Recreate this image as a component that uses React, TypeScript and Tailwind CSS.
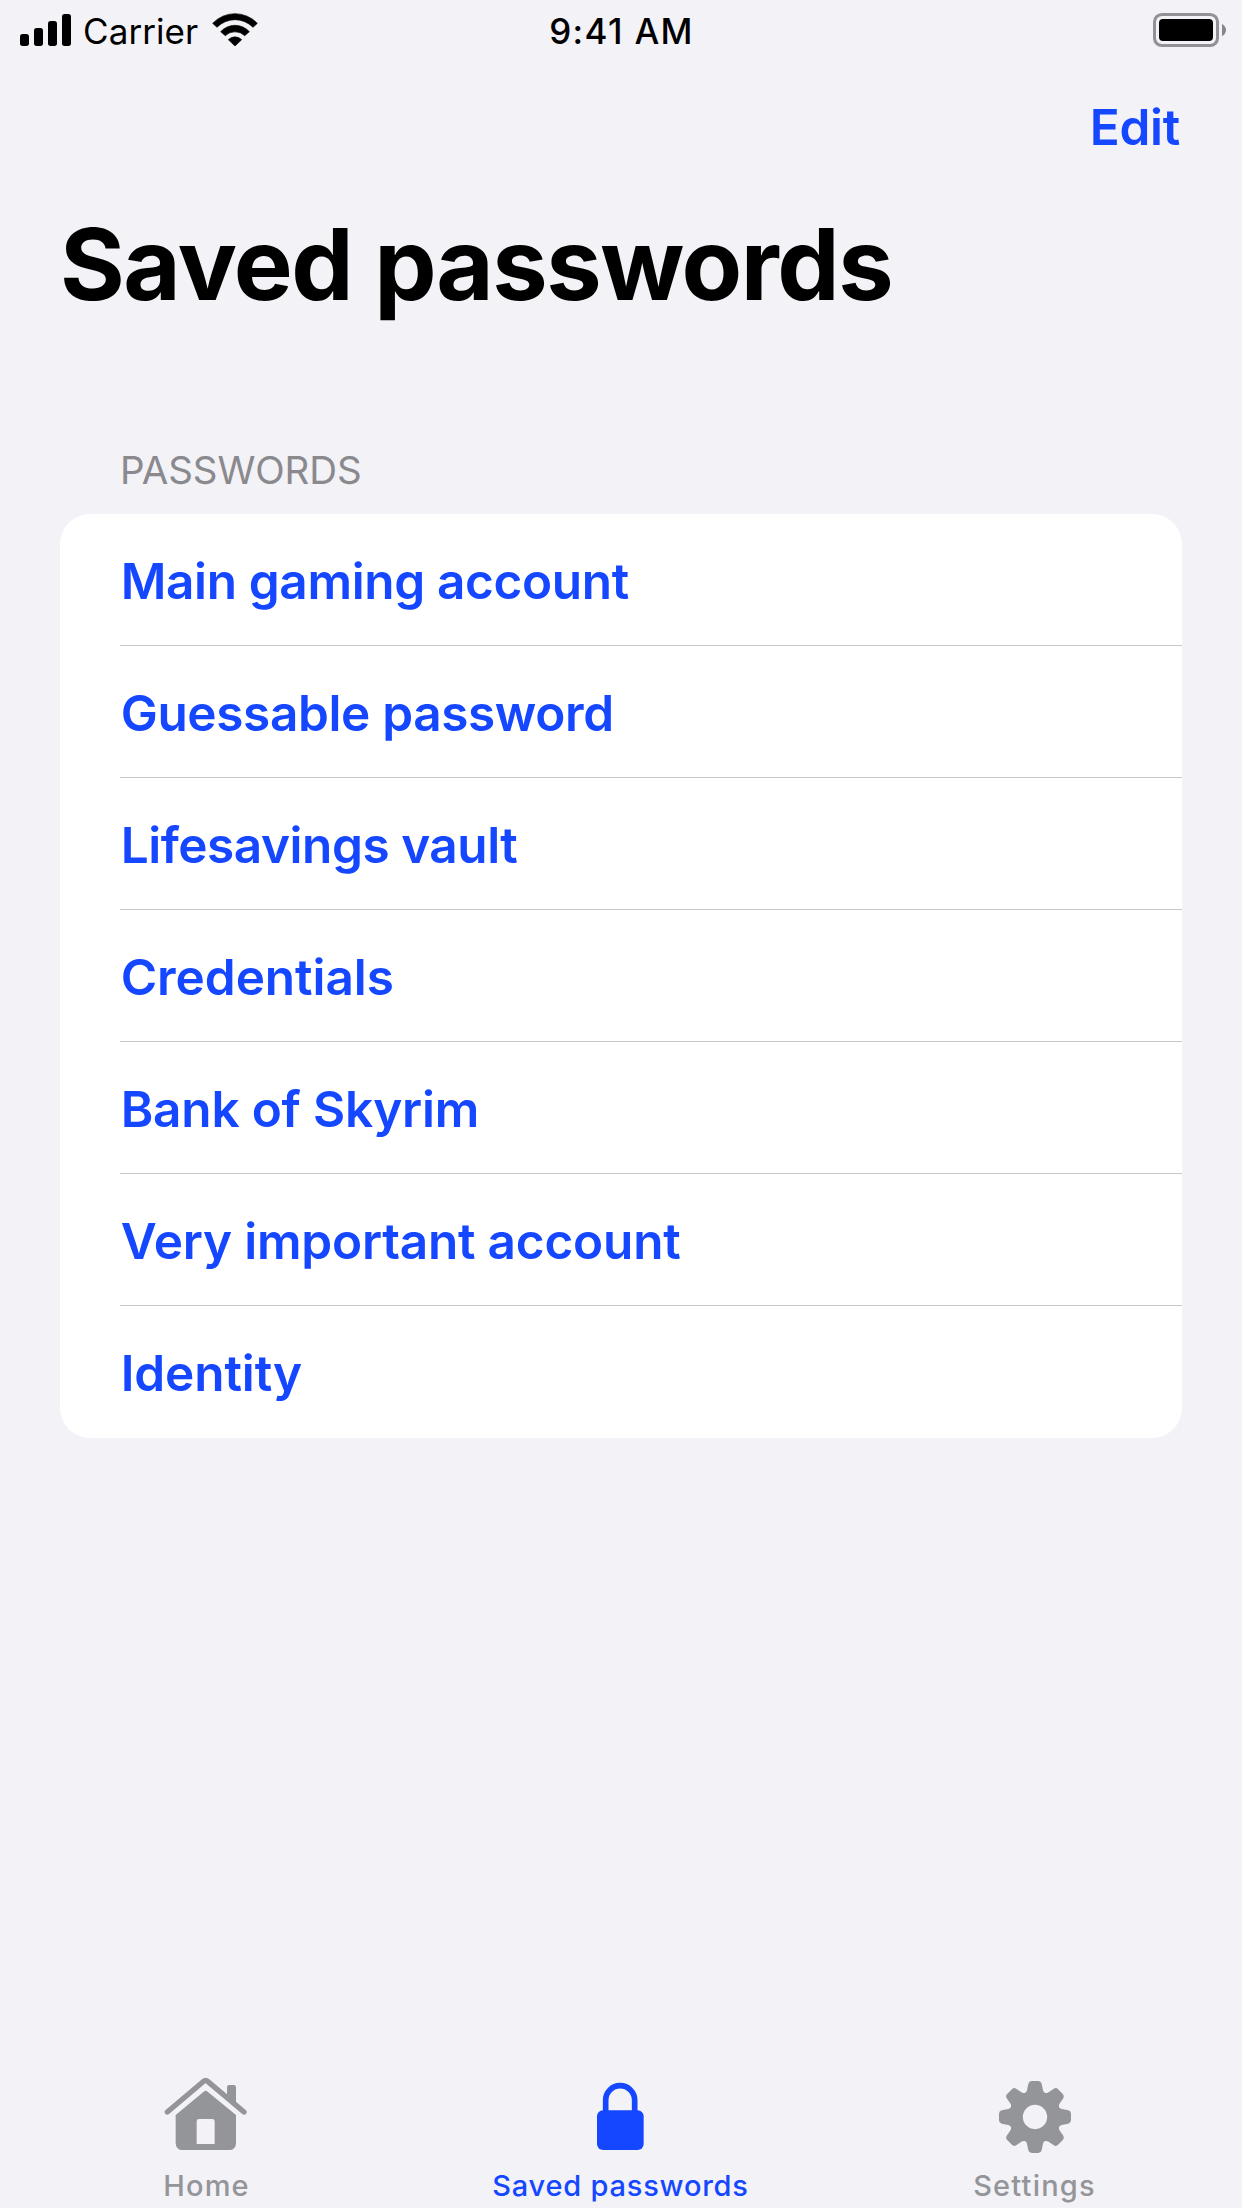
import React from "react";

const accounts = [
  { name: "Main gaming account", spacing: "tracking-[-0.35px]" },
  { name: "Guessable password", spacing: "tracking-[-0.36px]" },
  { name: "Lifesavings vault", spacing: "tracking-[-0.46px]" },
  { name: "Credentials", spacing: "tracking-[-0.06px]" },
  { name: "Bank of Skyrim", spacing: "tracking-[-0.2px]" },
  { name: "Very important account", spacing: "tracking-[-0.2px]" },
  { name: "Identity", spacing: "tracking-[-0.1px]" },
];

function SignalIcon() {
  return (
    <svg className="h-8 w-[51px]" viewBox="60 42 153 96" fill="currentColor">
      <rect x="60" y="102" width="27" height="36" rx="8" />
      <rect x="102" y="84" width="27" height="54" rx="8" />
      <rect x="144" y="63" width="27" height="75" rx="8" />
      <rect x="186" y="42" width="27" height="96" rx="8" />
    </svg>
  );
}

function WifiIcon() {
  return (
    <svg className="h-[34px] w-[46px]" viewBox="636 38 138 102" fill="currentColor" stroke="currentColor" strokeWidth="2" strokeLinejoin="round">
      <path d="M638 69A92 92 0 0 1 772 69L759 81A75 75 0 0 0 651 81Z" />
      <path d="M662 94A58 58 0 0 1 748 94L734 106A42 42 0 0 0 676 106Z" />
      <path d="M685 118A28 28 0 0 1 725 118L705 137Z" />
    </svg>
  );
}

function BatteryIcon() {
  return (
    <svg className="h-[34px] w-[73px]" viewBox="279 39 219 102">
      <rect x="283.5" y="43.5" width="189" height="93" rx="22" fill="none" stroke="#929195" strokeWidth="9" />
      <rect x="297" y="57" width="162" height="66" rx="12" fill="#000" />
      <path d="M486 71Q498 79 498 90Q498 101 486 109Z" fill="#87868a" />
    </svg>
  );
}

function HomeIcon() {
  return (
    <svg className="h-[100px] w-[130px]" viewBox="6 0 390 300" fill="currentColor">
      <path d="M82 156L191 64Q197 59 203 64L312 156" fill="none" stroke="currentColor" strokeWidth="16" strokeLinecap="round" />
      <path d="M261 112V82Q261 75 268 75H281Q288 75 288 82V136Z" />
      <path
        fillRule="evenodd"
        d="M107 165L191 95Q197 90 203 95L288 165V248Q288 270 267 270H128Q107 270 107 248ZM170 252H224V184Q224 177 217 177H177Q170 177 170 184Z"
      />
    </svg>
  );
}

function LockIcon() {
  return (
    <svg className="h-[100px] w-[130px]" viewBox="228 0 390 300" fill="currentColor">
      <path d="M377 156V120.500A43.500 43.500 0 0 1 464 120.500V156" fill="none" stroke="currentColor" strokeWidth="17" />
      <rect x="351" y="151" width="140" height="119" rx="18" />
    </svg>
  );
}

function GearIcon() {
  return (
    <svg className="h-[100px] w-[130px]" viewBox="30 0 390 300" fill="currentColor">
      <g transform="translate(225 171)">
        <path fillRule="evenodd" d="M0 -76A76 76 0 1 1 0 76A76 76 0 1 1 0 -76ZM0 -36.500A36.500 36.500 0 1 0 0 36.500A36.500 36.500 0 1 0 0 -36.500Z" />
        {[0, 45, 90, 135, 180, 225, 270, 315].map((angle) => (
          <path
            key={angle}
            transform={`rotate(${angle})`}
            d="M-31 -69Q-30 -73 -27.500 -74Q-25 -76 -24 -80L-20 -100Q-18 -108 -10 -108H10Q18 -108 20 -100L24 -80Q25 -76 27.500 -74Q30 -73 31 -69L18 -60H-18Z"
          />
        ))}
      </g>
    </svg>
  );
}

const tabs = [
  { label: "Home", Icon: HomeIcon, color: "text-[#949599]", spacing: "tracking-[1.2px]" },
  { label: "Saved passwords", Icon: LockIcon, color: "text-[#1447ff]", spacing: "tracking-[0.78px]" },
  { label: "Settings", Icon: GearIcon, color: "text-[#949599]", spacing: "tracking-[1.2px]" },
];

export default function App() {
  return (
    <div className="flex h-[2208px] w-[1242px] flex-col overflow-hidden bg-[#f2f2f7] font-['Inter',sans-serif] text-black">
      <header className="grid h-[63px] shrink-0 grid-cols-3 text-[35px] leading-[63px]">
        <div className="flex items-start pl-5">
          <div className="pt-3.5"><SignalIcon /></div>
          <span className="ml-3 tracking-[0.08px]">Carrier</span>
          <div className="ml-3.5 pt-[13px]"><WifiIcon /></div>
        </div>
        <div className="pl-px text-center font-medium tracking-[1.32px]">9:41 AM</div>
        <div className="flex items-start justify-end pt-[13px] pr-4"><BatteryIcon /></div>
      </header>

      <nav className="flex h-32 shrink-0 justify-end pr-[62px] text-[49.5px] leading-[128px] font-semibold text-[#1447ff]">
        <button className="tracking-[-0.27px]">Edit</button>
      </nav>

      <h1 className="shrink-0 pl-[60px] text-[99px] leading-[146px] font-bold tracking-[-1.45px]">Saved passwords</h1>

      <main className="flex-1 px-[60px] pt-[103px]">
        <h2 className="pl-[60px] text-[38.5px] leading-[60px] tracking-[-0.08px] text-[#8a898e]">PASSWORDS</h2>
        <ul className="mt-3.5 overflow-hidden rounded-[30px] bg-white pl-[60px] text-[49.5px] leading-[134px] font-semibold text-[#1447ff]">
          {accounts.map(({ name, spacing }) => (
            <li key={name} className={`h-[132px] border-b border-[#c6c6c8] pl-[0.7px] last:border-b-0 ${spacing}`}>{name}</li>
          ))}
        </ul>
      </main>

      <footer className="grid h-[148px] shrink-0 grid-cols-3">
        {tabs.map(({ label, Icon, color, spacing }) => (
          <button key={label} className={`flex flex-col items-center ${color}`}>
            <Icon />
            <span className={`mt-2 pr-px text-[29px] leading-9 font-medium ${spacing}`}>{label}</span>
          </button>
        ))}
      </footer>
    </div>
  );
}
